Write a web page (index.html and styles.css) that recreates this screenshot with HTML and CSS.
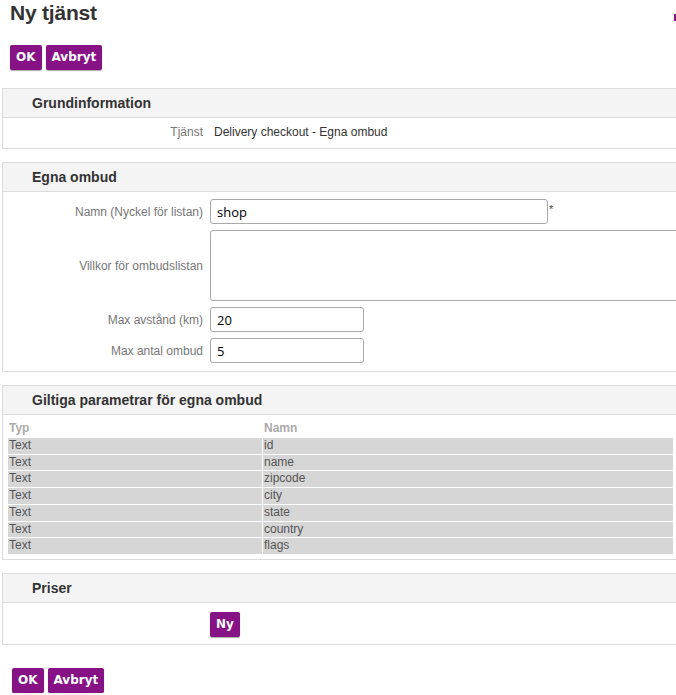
FILE: index.html
```html
<!DOCTYPE html>
<html lang="sv">
<head>
<meta charset="utf-8">
<title>Ny tjänst</title>
<link rel="stylesheet" href="styles.css">
</head>
<body>
<div class="page">
  <div class="title-row">
    <h1 class="title">Ny tjänst</h1>
    <span class="corner-mark" aria-hidden="true"></span>
  </div>
  <div class="actions top-actions">
    <button class="btn" type="button">OK</button>
    <button class="btn" type="button">Avbryt</button>
  </div>

  <section class="panel first">
    <h2 class="panel-head">Grundinformation</h2>
    <div class="panel-body info-body">
      <div class="row">
        <div class="label">Tjänst</div>
        <div class="value">Delivery checkout - Egna ombud</div>
      </div>
    </div>
  </section>

  <section class="panel">
    <h2 class="panel-head">Egna ombud</h2>
    <div class="panel-body form-body">
      <div class="row">
        <label class="label">Namn (Nyckel för listan)</label>
        <div class="field"><input class="input wide" type="text" value="shop"><span class="req">*</span></div>
      </div>
      <div class="row">
        <label class="label">Villkor för ombudslistan</label>
        <div class="field"><textarea class="input area"></textarea></div>
      </div>
      <div class="row">
        <label class="label">Max avstånd (km)</label>
        <div class="field"><input class="input short" type="text" value="20"></div>
      </div>
      <div class="row">
        <label class="label">Max antal ombud</label>
        <div class="field"><input class="input short" type="text" value="5"></div>
      </div>
    </div>
  </section>

  <section class="panel">
    <h2 class="panel-head">Giltiga parametrar för egna ombud</h2>
    <div class="panel-body table-body">
      <table class="params">
        <thead>
          <tr><th class="c1">Typ</th><th class="c2">Namn</th></tr>
        </thead>
        <tbody>
          <tr><td class="c1">Text</td><td class="c2">id</td></tr>
          <tr><td class="c1">Text</td><td class="c2">name</td></tr>
          <tr><td class="c1">Text</td><td class="c2">zipcode</td></tr>
          <tr><td class="c1">Text</td><td class="c2">city</td></tr>
          <tr><td class="c1">Text</td><td class="c2">state</td></tr>
          <tr><td class="c1">Text</td><td class="c2">country</td></tr>
          <tr><td class="c1">Text</td><td class="c2">flags</td></tr>
        </tbody>
      </table>
    </div>
  </section>

  <section class="panel">
    <h2 class="panel-head">Priser</h2>
    <div class="panel-body price-body">
      <div class="row">
        <div class="label"></div>
        <div class="field"><button class="btn" type="button">Ny</button></div>
      </div>
    </div>
  </section>

  <div class="actions bottom-actions">
    <button class="btn" type="button">OK</button>
    <button class="btn" type="button">Avbryt</button>
  </div>
</div>
</body>
</html>
```

FILE: styles.css
```css
html, body {
  margin: 0;
  padding: 0;
  overflow: hidden;
  background: #fff;
}

body {
  font-family: "Liberation Sans", Arial, sans-serif;
  font-size: 12px;
  color: #333;
}

.page {
  width: 820px;
  padding-left: 2px;
}

.title-row {
  display: flex;
  align-items: flex-start;
  padding-top: 1px;
}

.title {
  flex: 0 0 664px;
  margin: 0 0 0 8px;
  font-size: 21px;
  line-height: 24px;
  font-weight: bold;
  color: #333;
  letter-spacing: -0.2px;
}

.corner-mark {
  display: block;
  width: 2px;
  height: 7px;
  margin-top: 13px;
  background: #861286;
}

.actions {
  display: flex;
  gap: 4px;
}

.top-actions {
  margin: 20px 0 0 8px;
}

.bottom-actions {
  margin: 23px 0 0 10px;
}

.btn {
  height: 25px;
  padding: 0 6px;
  border: none;
  border-radius: 2px;
  background: #861286;
  color: #fff;
  font-family: "DejaVu Sans", Verdana, sans-serif;
  font-weight: bold;
  font-size: 12px;
  line-height: 25px;
  box-shadow: 0 1px 1px rgba(0, 0, 0, 0.35);
  cursor: pointer;
}

.panel {
  border: 1px solid #dcdcdc;
  border-right: none;
  margin-top: 13px;
}

.panel.first {
  margin-top: 18px;
}

.panel-head {
  margin: 0;
  height: 28px;
  line-height: 28px;
  padding-left: 29px;
  background: #f4f4f4;
  border-bottom: 1px solid #dcdcdc;
  font-size: 14px;
  font-weight: bold;
  color: #333;
}

.row {
  display: grid;
  grid-template-columns: 200px 1fr;
  column-gap: 7px;
  align-items: center;
}

.label {
  text-align: right;
  color: #777;
  font-size: 12px;
}

.value {
  padding-left: 4px;
  color: #333;
}

.info-body {
  height: 30px;
  box-sizing: border-box;
  padding-top: 7px;
  line-height: 15px;
}

.form-body {
  padding: 7px 0 8px;
  display: flex;
  flex-direction: column;
  gap: 6px;
}

.field {
  display: flex;
  align-items: flex-start;
}

.input {
  box-sizing: border-box;
  height: 25px;
  border: 1px solid #a9a9a9;
  border-radius: 3px;
  padding: 0 6px;
  font-family: "Open Sans", "Segoe UI", sans-serif;
  font-size: 13px;
  color: #000;
  background: #fff;
  margin: 0;
}

.wide {
  width: 338px;
}

.short {
  width: 154px;
}

.area {
  width: 520px;
  height: 71px;
  resize: none;
  display: block;
}

.req {
  font-size: 11px;
  color: #444;
  margin-left: 1px;
  margin-top: 3px;
  line-height: 14px;
}

.table-body {
  padding: 4px 0 4px 5px;
}

.params {
  border-collapse: collapse;
  width: 665px;
  font-size: 12px;
}

.params th {
  text-align: left;
  font-weight: bold;
  color: #aaa;
  height: 19px;
  padding: 0 1px;
  line-height: 19px;
}

.params td {
  background: #d6d6d6;
  color: #555;
  padding: 0 1px;
  height: 15.7px;
  line-height: 15.7px;
  border-bottom: 1px solid #fff;
}

.params .c1 {
  width: 252px;
}

.params td.c2,
.params th.c2 {
  border-left: 1px solid #fff;
}

.price-body {
  padding: 9px 0 7px;
}
```
